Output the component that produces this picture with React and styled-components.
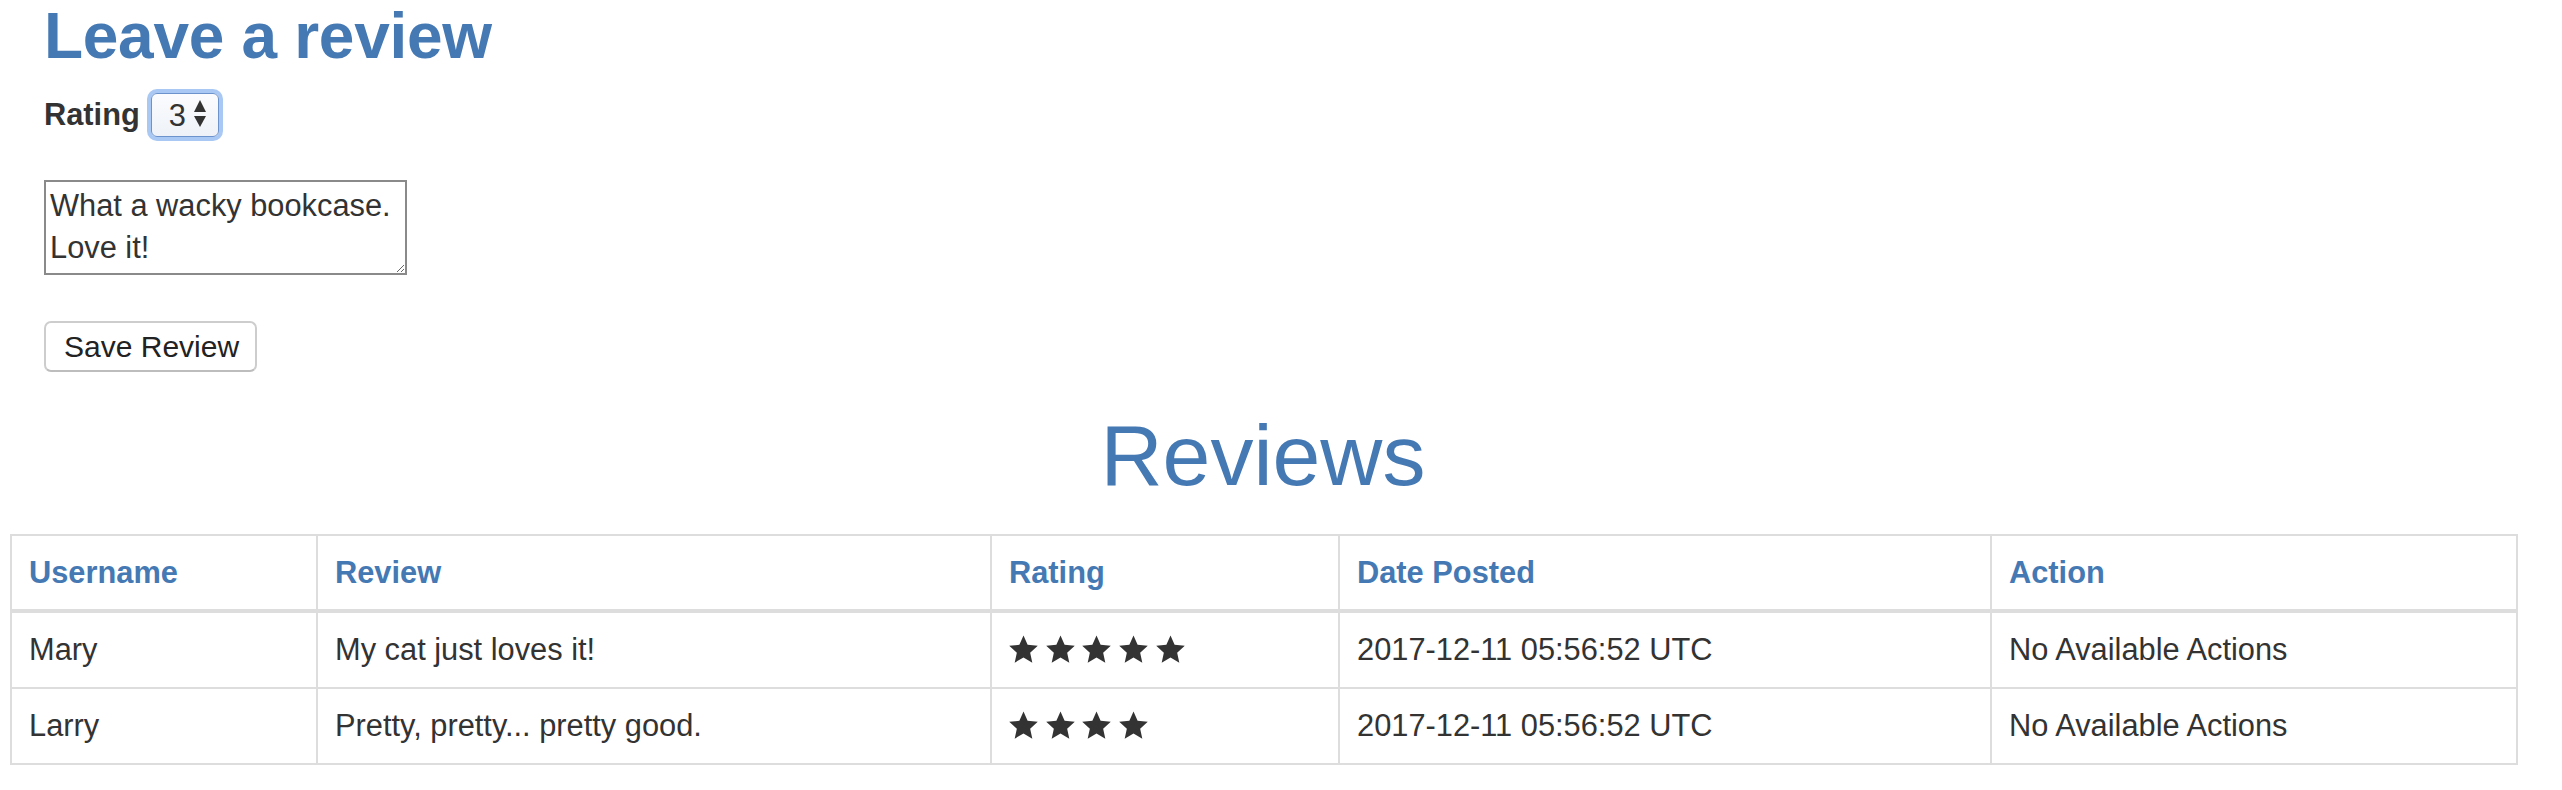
import styled, { createGlobalStyle } from 'styled-components';

const reviews = [
  { username: 'Mary', review: 'My cat just loves it!', rating: 5, date: '2017-12-11 05:56:52 UTC' },
  { username: 'Larry', review: 'Pretty, pretty... pretty good.', rating: 4, date: '2017-12-11 05:56:52 UTC' },
];

const columns = [
  { title: 'Username', width: 306 },
  { title: 'Review', width: 674 },
  { title: 'Rating', width: 348 },
  { title: 'Date Posted', width: 652 },
  { title: 'Action', width: 526 },
];

const Star = () => (
  <StarSvg viewBox="0 0 29 28.5">
    <polygon points="14.5,0.5 18.61,9.84 28.77,10.86 21.16,17.66 23.32,27.64 14.5,22.5 5.68,27.64 7.84,17.66 0.23,10.86 10.39,9.84" />
  </StarSvg>
);

const App = () => {
  return (
    <Page>
      <GlobalStyle />
      <FormWrap>
        <Title>Leave a review</Title>

        <RatingRow>
          <Label htmlFor="rating">Rating</Label>
          <SelectWrap>
            <Select id="rating" defaultValue="3">
              {[1, 2, 3, 4, 5].map(n => (
                <option key={n} value={n}>{n}</option>
              ))}
            </Select>
            <Arrows viewBox="0 0 12 27">
              <polygon points="6,0 12,12 0,12" />
              <polygon points="0,16 12,16 6,27" />
            </Arrows>
          </SelectWrap>
        </RatingRow>

        <TextArea defaultValue={'What a wacky bookcase.\nLove it!'} />

        <SaveButton type="button">Save Review</SaveButton>
      </FormWrap>

      <ReviewsWrap>
        <ReviewsTitle>Reviews</ReviewsTitle>

        <Table>
          <colgroup>
            {columns.map(col => (
              <Col key={col.title} $width={col.width} />
            ))}
          </colgroup>
          <thead>
            <tr>
              {columns.map(col => (
                <HeadCell key={col.title}>{col.title}</HeadCell>
              ))}
            </tr>
          </thead>
          <tbody>
            {reviews.map(item => (
              <tr key={item.username}>
                <Cell>{item.username}</Cell>
                <Cell>{item.review}</Cell>
                <Cell>
                  <Stars>
                    {Array.from({ length: item.rating }).map((_, i) => (
                      <Star key={i} />
                    ))}
                  </Stars>
                </Cell>
                <Cell>{item.date}</Cell>
                <Cell>No Available Actions</Cell>
              </tr>
            ))}
          </tbody>
        </Table>
      </ReviewsWrap>
    </Page>
  );
};

export default App;

const GlobalStyle = createGlobalStyle`
  html, body {
    margin: 0;
    padding: 0;
    background: #fff;
  }

  body {
    font-family: "Liberation Sans", Arial, Helvetica, sans-serif;
    font-size: 30.8px;
    line-height: 44px;
    color: #333;
  }
`;

const Page = styled.div`
  display: flex;
  flex-direction: column;
`;

const FormWrap = styled.div`
  display: flex;
  flex-direction: column;
  align-items: flex-start;
  padding: 1px 0 0 44px;
`;

const Title = styled.h2`
  margin: 0;
  font-size: 64px;
  line-height: 1.1;
  font-weight: 700;
  letter-spacing: -0.3px;
  color: #4579b4;
`;

const RatingRow = styled.div`
  display: flex;
  align-items: center;
  gap: 11px;
  margin-top: 22px;
`;

const Label = styled.label`
  font-weight: 700;
  line-height: 44px;
`;

const SelectWrap = styled.div`
  position: relative;
  display: flex;
`;

const Select = styled.select`
  appearance: none;
  -webkit-appearance: none;
  width: 68px;
  height: 44px;
  padding: 0 0 0 17px;
  border: 1px solid #6d93cc;
  border-radius: 6px;
  background: linear-gradient(#fbfcfe, #eef2f8);
  box-shadow: 0 0 0 4px #a9c8f4;
  font-family: "Liberation Sans", Arial, sans-serif;
  font-size: 30.8px;
  color: #333;
  outline: none;
`;

const Arrows = styled.svg`
  position: absolute;
  left: 43px;
  top: 7px;
  width: 12px;
  height: 27px;
  fill: #333;
  pointer-events: none;
`;

const TextArea = styled.textarea`
  box-sizing: border-box;
  width: 363px;
  height: 95px;
  margin-top: 43px;
  padding: 3px 4px 2px;
  border: 2px solid #8a8a8a;
  font-family: "Liberation Sans", Arial, sans-serif;
  font-size: 30.8px;
  line-height: 42px;
  color: #333;
  outline: none;
`;

const SaveButton = styled.button`
  box-sizing: border-box;
  height: 51px;
  margin-top: 46px;
  padding: 0 16px 0 18px;
  border: 2px solid #cdcdcd;
  border-bottom-color: #bdbdbd;
  border-radius: 7px;
  background: #fff;
  font-family: "Liberation Sans", Arial, sans-serif;
  font-size: 30px;
  color: #222;
`;

const ReviewsWrap = styled.div`
  display: flex;
  flex-direction: column;
  padding: 0 46px 0 10px;
`;

const ReviewsTitle = styled.h1`
  margin: 36px 0 31px;
  font-size: 86px;
  line-height: 1.1;
  font-weight: 400;
  text-align: center;
  color: #4579b4;
`;

const Table = styled.table`
  width: 2506px;
  table-layout: fixed;
  border-collapse: collapse;
  border: 2px solid #ddd;
`;

const Col = styled.col`
  width: ${({ $width }) => $width}px;
`;

const HeadCell = styled.th`
  padding: 15px 17px 14px;
  border: 2px solid #ddd;
  border-bottom-width: 4px;
  text-align: left;
  font-weight: 700;
  color: #4579b4;
`;

const Cell = styled.td`
  padding: 15px 17px 15px;
  border: 2px solid #ddd;
  vertical-align: top;
`;

const Stars = styled.span`
  display: inline-flex;
  gap: 7.7px;
  vertical-align: middle;
  position: relative;
  top: -3px;
`;

const StarSvg = styled.svg`
  width: 29px;
  height: 28.5px;
  fill: #333;
`;
